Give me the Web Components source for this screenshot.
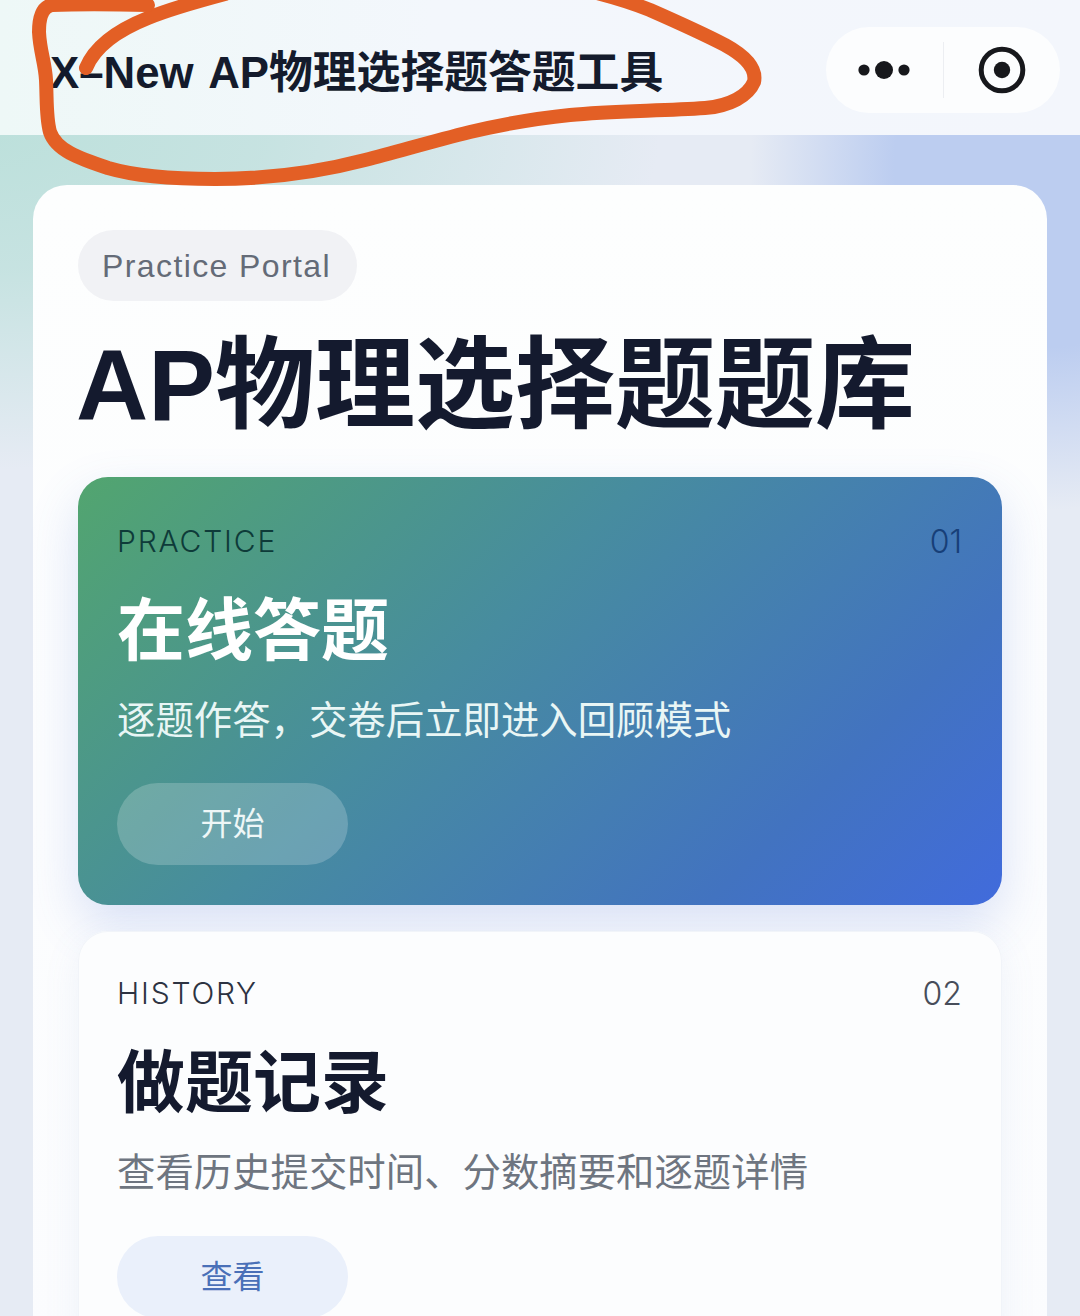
<!DOCTYPE html>
<html lang="zh-CN">
<head>
<meta charset="utf-8">
<title>AP物理选择题题库</title>
<style>
  html, body { margin: 0; padding: 0; }
  body { font-family: "Liberation Sans", "Noto Sans CJK SC", sans-serif; }
</style>
</head>
<body>
<ap-app>
  <mini-nav title-text="X–New AP物理选择题答题工具"></mini-nav>
  <portal-panel badge="Practice Portal" heading="AP物理选择题题库">
    <entry-card variant="primary" tag="PRACTICE" num="01" heading="在线答题" desc="逐题作答，交卷后立即进入回顾模式" action="开始"></entry-card>
    <entry-card tag="HISTORY" num="02" heading="做题记录" desc="查看历史提交时间、分数摘要和逐题详情" action="查看"></entry-card>
  </portal-panel>
  <scribble-mark></scribble-mark>
</ap-app>

<script>
class ApApp extends HTMLElement {
    constructor() {
        super();
        this.attachShadow({ mode: 'open' });
        this.shadowRoot.innerHTML = `
            <style>
                :host {
                    display: block;
                    position: relative;
                    width: 1080px;
                    height: 1316px;
                    overflow: hidden;
                    background:
                        radial-gradient(300px 340px at 1050px 170px, #bccdf0 0%, #bccdf0 52%, rgba(188,205,240,0) 100%),
                        radial-gradient(680px 340px at -20px 130px, #bce0db 0%, rgba(188,224,219,0.75) 42%, rgba(188,224,219,0) 100%),
                        #e6ebf4;
                }
            </style>
            <slot></slot>
        `;
    }
}

class MiniNav extends HTMLElement {
    constructor() {
        super();
        this.attachShadow({ mode: 'open' });
        this.shadowRoot.innerHTML = `
            <style>
                :host {
                    display: flex;
                    align-items: center;
                    justify-content: space-between;
                    box-sizing: border-box;
                    height: 135px;
                    padding: 0 20px 0 50px;
                    background: linear-gradient(90deg, #eef8f7 0%, #f3f7fc 40%, #f3f6fc 100%);
                }
                .title {
                    font-size: 43.8px;
                    font-weight: 700;
                    word-spacing: 4px;
                    color: #141b2c;
                    white-space: nowrap;
                    margin-top: 2px;
                }
                .capsule {
                    display: flex;
                    align-items: center;
                    width: 234px;
                    height: 86px;
                    margin-top: 4px;
                    border-radius: 43px;
                    background: #fcfdfe;
                }
                .side { flex: 1; display: flex; align-items: center; justify-content: center; }
                .line { width: 1px; height: 56px; background: #eceef2; }
                svg { display: block; }
            </style>
            <div class="title"></div>
            <div class="capsule">
                <div class="side">
                    <svg width="54" height="20" viewBox="0 0 54 20"><circle cx="7" cy="10" r="5.6" fill="#17181c"/><circle cx="27" cy="10" r="9" fill="#17181c"/><circle cx="47" cy="10" r="5.6" fill="#17181c"/></svg>
                </div>
                <div class="line"></div>
                <div class="side">
                    <svg width="48" height="48" viewBox="0 0 48 48"><circle cx="24" cy="24" r="20.8" fill="none" stroke="#17181c" stroke-width="5"/><circle cx="24" cy="24" r="8.2" fill="#17181c"/></svg>
                </div>
            </div>
        `;
        this.shadowRoot.querySelector('.title').textContent = this.getAttribute('title-text');
    }
}

class PortalPanel extends HTMLElement {
    constructor() {
        super();
        this.attachShadow({ mode: 'open' });
        this.shadowRoot.innerHTML = `
            <style>
                :host {
                    display: block;
                    box-sizing: border-box;
                    margin: 50px 33px 0;
                    height: 1200px;
                    padding: 45px 45px 0;
                    border-radius: 34px;
                    background: linear-gradient(180deg, #fdfefe 0%, #fbfcfe 100%);
                }
                .badge {
                    display: inline-flex;
                    align-items: center;
                    box-sizing: border-box;
                    width: 279px;
                    height: 71px;
                    padding: 2px 0 0 24px;
                    border-radius: 36px;
                    background: #f1f2f5;
                    color: #646b77;
                    font-size: 32px;
                    letter-spacing: 1.4px;
                }
                h1 {
                    margin: 23px 0 31px -2px;
                    font-size: 100px;
                    line-height: 122px;
                    font-weight: 700;
                    color: #141a2e;
                    white-space: nowrap;
                }
                .cards { display: flex; flex-direction: column; gap: 26px; }
            </style>
            <div class="badge"></div>
            <h1></h1>
            <div class="cards"><slot></slot></div>
        `;
        this.shadowRoot.querySelector('.badge').textContent = this.getAttribute('badge');
        this.shadowRoot.querySelector('h1').textContent = this.getAttribute('heading');
    }
}

class EntryCard extends HTMLElement {
    constructor() {
        super();
        this.attachShadow({ mode: 'open' });
        this.shadowRoot.innerHTML = `
            <style>
                :host {
                    display: block;
                    box-sizing: border-box;
                    padding: 42px 40px 40px 39px;
                    border-radius: 30px;
                    background: #fcfdfe;
                    box-shadow: inset 0 0 0 1px #f1f4f9, 0 10px 36px rgba(120, 145, 205, 0.1);
                    color: #141a2e;
                }
                :host([variant="primary"]) {
                    padding-top: 44px;
                    background: linear-gradient(135deg, #52a56f 0%, #478c9f 42%, #4273c0 78%, #416bdc 100%);
                    box-shadow: 0 20px 50px rgba(80, 115, 215, 0.2);
                    color: #fff;
                }
                .top {
                    display: flex;
                    justify-content: space-between;
                    align-items: center;
                    height: 40px;
                    font-family: Inter, "Liberation Sans", sans-serif;
                    font-weight: 300;
                    font-size: 30px;
                    letter-spacing: 1.8px;
                    color: #2d3342;
                }
                :host([variant="primary"]) .tag { color: #0e3b39; }
                :host([variant="primary"]) .num { color: #173f78; }
                .num { font-size: 32px; letter-spacing: 0; color: #474d5a; }
                h2 {
                    margin: 28px 0 0;
                    font-size: 68px;
                    line-height: 84px;
                    font-weight: 700;
                }
                p {
                    margin: 22px 0 0;
                    font-size: 38.4px;
                    line-height: 52px;
                    color: #6e7580;
                    white-space: nowrap;
                }
                :host([variant="primary"]) p { color: #e9f6f5; }
                .action {
                    display: flex;
                    align-items: center;
                    justify-content: center;
                    box-sizing: border-box;
                    width: 231px;
                    height: 82px;
                    padding-bottom: 7px;
                    margin-top: 37px;
                    border-radius: 41px;
                    background: #eaf0fb;
                    color: #4a70b8;
                    font-size: 32px;
                }
                :host([variant="primary"]) .action {
                    margin-top: 36px;
                    background: rgba(255, 255, 255, 0.2);
                    color: #eef7f7;
                }
            </style>
            <div class="top"><span class="tag"></span><span class="num"></span></div>
            <h2></h2>
            <p></p>
            <div class="action"></div>
        `;
        const root = this.shadowRoot;
        root.querySelector('.tag').textContent = this.getAttribute('tag');
        root.querySelector('.num').textContent = this.getAttribute('num');
        root.querySelector('h2').textContent = this.getAttribute('heading');
        root.querySelector('p').textContent = this.getAttribute('desc');
        root.querySelector('.action').textContent = this.getAttribute('action');
    }
}

// the orange pen circle drawn over the screenshot
class ScribbleMark extends HTMLElement {
    constructor() {
        super();
        this.attachShadow({ mode: 'open' });
        this.shadowRoot.innerHTML = `
            <style>
                :host { position: absolute; left: 0; top: 0; width: 1080px; height: 200px; pointer-events: none; }
                svg { display: block; }
                path { fill: none; stroke: #e35f25; stroke-width: 14; stroke-linecap: round; stroke-linejoin: round; }
            </style>
            <svg width="1080" height="200" viewBox="0 0 1080 200">
                <path d="M86 68 C95 46 118 30 148 18 C170 9 195 2 225 -6"/>
                <path d="M148 5 C110 4 75 4 52 5 C42 7 39 18 39 32 C40 52 45 62 46 80 C47 100 46 118 50 132 C56 150 78 158 108 168 C135 176 170 179 215 179 C265 179 315 173 365 160 C400 151 430 142 470 132 C500 125 530 119 570 115 C610 111 660 111 705 108 C730 106 748 96 754 82 C757 68 745 56 725 45 C700 32 675 21 650 10 C630 2 610 -4 585 -10"/>
            </svg>
        `;
    }
}

customElements.define('ap-app', ApApp);
customElements.define('mini-nav', MiniNav);
customElements.define('portal-panel', PortalPanel);
customElements.define('entry-card', EntryCard);
customElements.define('scribble-mark', ScribbleMark);
</script>
</body>
</html>
